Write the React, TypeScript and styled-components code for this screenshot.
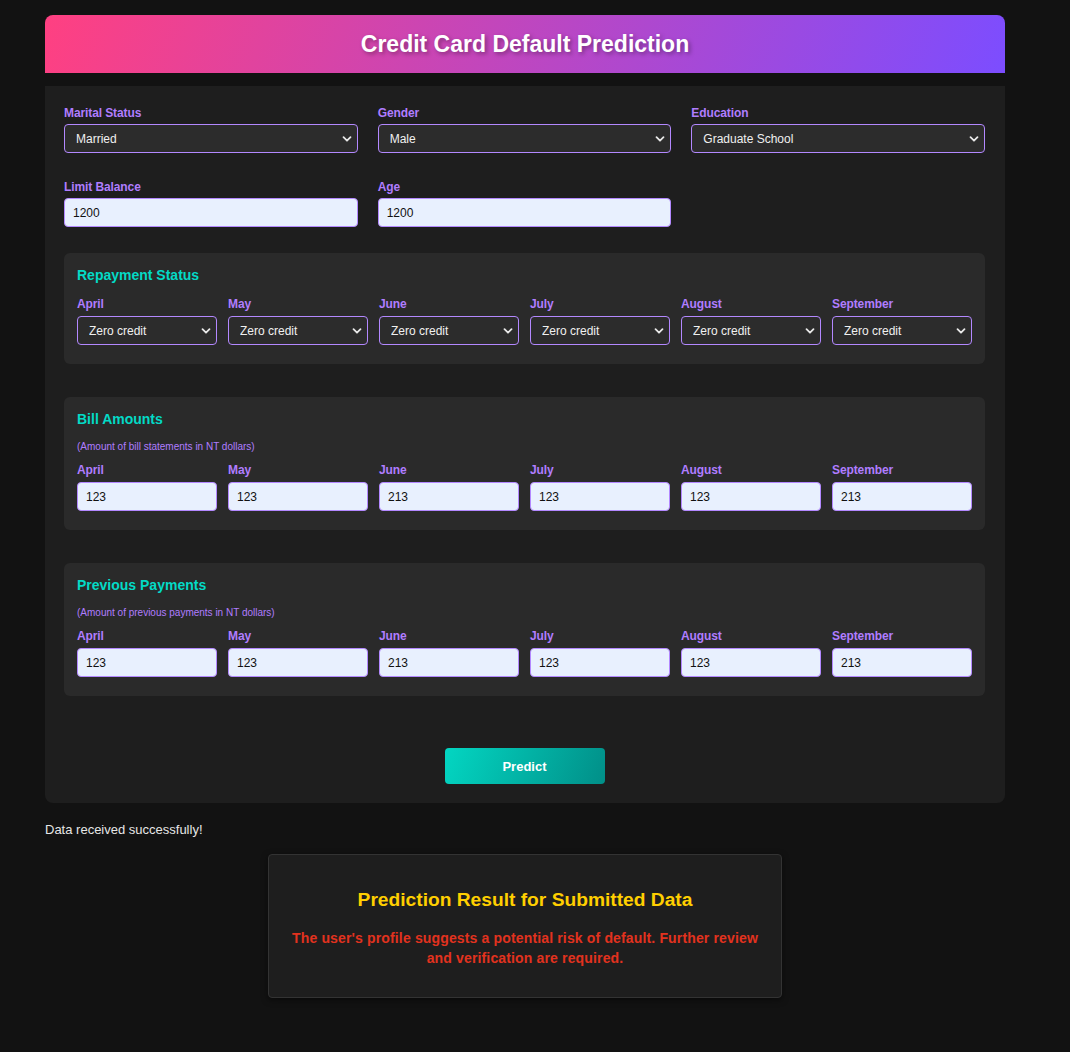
import React from "react";
import styled, { createGlobalStyle } from "styled-components";

const GlobalStyle = createGlobalStyle`
  html, body {
    margin: 0;
    padding: 0;
    background: #121212;
    font-family: "Liberation Sans", Arial, sans-serif;
    color: #e0e0e0;
  }
  * { box-sizing: border-box; }
`;

const Container = styled.div`
  width: 960px;
  margin: 15px 0 0 45px;
  padding-bottom: 40px;
`;

const Header = styled.header`
  height: 58px;
  border-radius: 8px 8px 0 0;
  background: linear-gradient(110deg, #ff4081 0%, #7c4dff 100%);
  display: flex;
  align-items: center;
  justify-content: center;
`;

const Title = styled.h1`
  margin: 0;
  font-size: 23px;
  font-weight: 700;
  color: #ffffff;
  text-shadow: 2px 2px 4px rgba(0, 0, 0, 0.35);
`;

const Panel = styled.form`
  margin-top: 13px;
  background: #1e1e1e;
  border-radius: 0 0 8px 8px;
  padding: 20px 20px 19px 19px;
  display: flex;
  flex-direction: column;
`;

const TopGrid = styled.div`
  display: grid;
  grid-template-columns: repeat(3, 1fr);
  column-gap: 20px;
  row-gap: 27px;
`;

const Field = styled.div`
  display: flex;
  flex-direction: column;
  min-width: 0;
`;

const Label = styled.label`
  font-size: 12px;
  line-height: 14px;
  font-weight: 700;
  color: #b07dff;
  margin-bottom: 4px;
  letter-spacing: -0.1px;
`;

const SelectWrap = styled.div`
  position: relative;
`;

const Select = styled.select`
  appearance: none;
  width: 100%;
  height: 29px;
  border: 1px solid #b388ff;
  border-radius: 4px;
  background: #2c2c2c;
  color: #f0f0f0;
  font-family: "Liberation Sans", Arial, sans-serif;
  font-size: 12px;
  padding: 0 24px 0 11px;
  outline: none;
`;

const Chevron = styled.svg`
  position: absolute;
  right: 6px;
  top: 50%;
  width: 10px;
  height: 10px;
  margin-top: -5px;
  pointer-events: none;
`;

const Input = styled.input`
  width: 100%;
  height: 29px;
  border: 1px solid #b388ff;
  border-radius: 4px;
  background: #e8f0fe;
  color: #111;
  font-family: "Liberation Sans", Arial, sans-serif;
  font-size: 12px;
  padding: 0 8px;
  outline: none;
`;

const Section = styled.section<{ $first?: boolean }>`
  margin-top: ${(p) => (p.$first ? "26px" : "33px")};
  background: #2a2a2a;
  border-radius: 6px;
  padding: 14px 13px 19px 13px;
`;

const SectionTitle = styled.h3`
  margin: 0 0 14px 0;
  font-size: 14px;
  line-height: 16px;
  font-weight: 700;
  color: #03dac6;
`;

const SectionNote = styled.p`
  margin: 1px 0 10px 0;
  font-size: 10px;
  line-height: 12px;
  color: #b07dff;
`;

const MonthGrid = styled.div`
  display: grid;
  grid-template-columns: repeat(6, 1fr);
  column-gap: 11px;
`;

const MonthLabel = styled(Label)`
  margin-bottom: 5px;
`;

const ButtonRow = styled.div`
  display: flex;
  justify-content: center;
  margin-top: 52px;
`;

const PredictButton = styled.button`
  width: 160px;
  height: 36px;
  border: none;
  border-radius: 4px;
  background: linear-gradient(110deg, #03d6c2 0%, #018f88 100%);
  color: #ffffff;
  font-family: "Liberation Sans", Arial, sans-serif;
  font-size: 13px;
  font-weight: 700;
  cursor: pointer;
`;

const Status = styled.p`
  margin: 19px 0 17px 0;
  font-size: 13px;
  line-height: 15px;
  color: #e6e6e6;
`;

const ResultBox = styled.div`
  width: 514px;
  margin: 0 auto;
  background: #1e1e1e;
  border: 1px solid #333333;
  border-radius: 4px;
  box-shadow: 0 2px 6px rgba(0, 0, 0, 0.5);
  padding: 33px 20px 29px;
  text-align: center;
`;

const ResultTitle = styled.h2`
  margin: 0 0 17px 0;
  font-size: 19.2px;
  line-height: 23px;
  font-weight: 700;
  color: #ffcf00;
`;

const ResultText = styled.p`
  margin: 0;
  font-size: 14px;
  line-height: 20px;
  font-weight: 700;
  color: #e2321e;
  letter-spacing: 0.15px;
`;

const months = ["April", "May", "June", "July", "August", "September"];
const bills = ["123", "123", "213", "123", "123", "213"];
const payments = ["123", "123", "213", "123", "123", "213"];

const Arrow = () => (
  <Chevron viewBox="0 0 10 10">
    <path d="M1.5 3.2 L5 6.7 L8.5 3.2" fill="none" stroke="#e8e8e8" strokeWidth="1.8" strokeLinecap="round" strokeLinejoin="round" />
  </Chevron>
);

const SelectField: React.FC<{ value: string; options: string[] }> = ({ value, options }) => (
  <SelectWrap>
    <Select defaultValue={value}>
      {options.map((o) => (
        <option key={o} value={o}>
          {o}
        </option>
      ))}
    </Select>
    <Arrow />
  </SelectWrap>
);

const NumberSection: React.FC<{ title: string; note: string; values: string[] }> = ({ title, note, values }) => (
  <Section>
    <SectionTitle>{title}</SectionTitle>
    <SectionNote>{note}</SectionNote>
    <MonthGrid>
      {months.map((m, i) => (
        <Field key={m}>
          <MonthLabel>{m}</MonthLabel>
          <Input type="text" defaultValue={values[i]} />
        </Field>
      ))}
    </MonthGrid>
  </Section>
);

export default function App() {
  return (
    <>
      <GlobalStyle />
      <Container>
        <Header>
          <Title>Credit Card Default Prediction</Title>
        </Header>
        <Panel onSubmit={(e) => e.preventDefault()}>
          <TopGrid>
            <Field>
              <Label>Marital Status</Label>
              <SelectField value="Married" options={["Married", "Single", "Others"]} />
            </Field>
            <Field>
              <Label>Gender</Label>
              <SelectField value="Male" options={["Male", "Female"]} />
            </Field>
            <Field>
              <Label>Education</Label>
              <SelectField value="Graduate School" options={["Graduate School", "University", "High School", "Others"]} />
            </Field>
            <Field>
              <Label>Limit Balance</Label>
              <Input type="text" defaultValue="1200" />
            </Field>
            <Field>
              <Label>Age</Label>
              <Input type="text" defaultValue="1200" />
            </Field>
          </TopGrid>

          <Section $first>
            <SectionTitle>Repayment Status</SectionTitle>
            <MonthGrid>
              {months.map((m) => (
                <Field key={m}>
                  <MonthLabel>{m}</MonthLabel>
                  <SelectField value="Zero credit" options={["Zero credit", "Paid duly", "Delay 1 month", "Delay 2 months"]} />
                </Field>
              ))}
            </MonthGrid>
          </Section>

          <NumberSection title="Bill Amounts" note="(Amount of bill statements in NT dollars)" values={bills} />
          <NumberSection title="Previous Payments" note="(Amount of previous payments in NT dollars)" values={payments} />

          <ButtonRow>
            <PredictButton type="submit">Predict</PredictButton>
          </ButtonRow>
        </Panel>

        <Status>Data received successfully!</Status>

        <ResultBox>
          <ResultTitle>Prediction Result for Submitted Data</ResultTitle>
          <ResultText>
            The user's profile suggests a potential risk of default. Further review and verification are required.
          </ResultText>
        </ResultBox>
      </Container>
    </>
  );
}
